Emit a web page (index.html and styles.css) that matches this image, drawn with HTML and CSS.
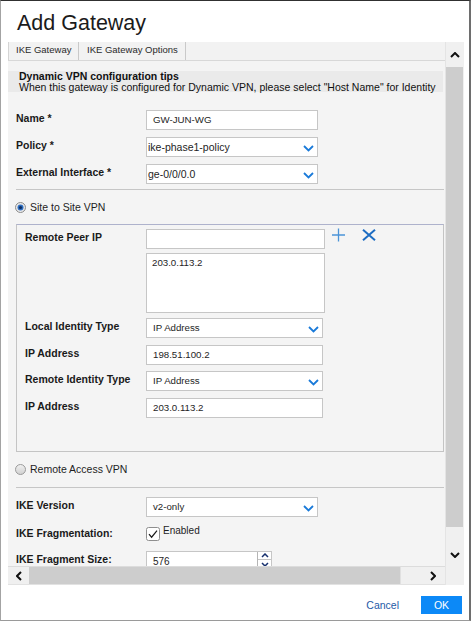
FILE: index.html
```html
<!DOCTYPE html>
<html>
<head>
<meta charset="utf-8">
<title>Add Gateway</title>
<link rel="stylesheet" href="styles.css">
</head>
<body>
<div class="dialog">
  <h1 class="title">Add Gateway</h1>
  <div class="scroller">
    <div class="viewport">
      <div class="tabs">
        <div class="tab tab1">IKE Gateway</div>
        <div class="tab tab2">IKE Gateway Options</div>
      </div>
      <div class="tips">
        <div class="tips-title">Dynamic VPN configuration tips</div>
        <div>When this gateway is configured for Dynamic VPN, please select "Host Name" for Identity</div>
      </div>
      <div class="form">
        <div class="row first">
          <div class="lbl">Name *</div>
          <div class="input w172">GW-JUN-WG</div>
        </div>
        <div class="row">
          <div class="lbl">Policy *</div>
          <div class="input select tight w172"><span>ike-phase1-policy</span><svg width="11" height="7" viewBox="0 0 11 7"><path d="M1 1l4.5 4.5L10 1" stroke="#1a7ad9" stroke-width="1.8" fill="none"/></svg></div>
        </div>
        <div class="row">
          <div class="lbl">External Interface *</div>
          <div class="input select tight w172"><span>ge-0/0/0.0</span><svg width="11" height="7" viewBox="0 0 11 7"><path d="M1 1l4.5 4.5L10 1" stroke="#1a7ad9" stroke-width="1.8" fill="none"/></svg></div>
        </div>
        <div class="sep"></div>
        <div class="radio-row">
          <svg class="radio" width="11" height="11" viewBox="0 0 11 11"><circle cx="5.5" cy="5.5" r="5" fill="#e9e9e9" stroke="#8c8c8c"/><circle cx="5.5" cy="5.5" r="3" fill="#2f6fc2"/><circle cx="5.5" cy="5.5" r="1.6" fill="#0f2f62"/></svg>
          <span>Site to Site VPN</span>
        </div>
        <div class="box">
          <div class="row boxrow firstbox">
            <div class="lbl blbl">Remote Peer IP</div>
            <div class="input w179"></div>
            <svg class="plus" width="15" height="14" viewBox="0 0 15 14"><path d="M7.5 0.5v13M1 7h13" stroke="#4b94d8" stroke-width="1.3" fill="none"/></svg>
            <svg class="xicon" width="14" height="12" viewBox="0 0 14 12"><path d="M1 0.8l12 10.4M13 0.8L1 11.2" stroke="#1c6cc2" stroke-width="2" fill="none"/></svg>
          </div>
          <div class="textarea">203.0.113.2</div>
          <div class="row boxrow afterarea">
            <div class="lbl blbl">Local Identity Type</div>
            <div class="input select w177"><span>IP Address</span><svg width="11" height="7" viewBox="0 0 11 7"><path d="M1 1l4.5 4.5L10 1" stroke="#1a7ad9" stroke-width="1.8" fill="none"/></svg></div>
          </div>
          <div class="row boxrow">
            <div class="lbl blbl">IP Address</div>
            <div class="input w177">198.51.100.2</div>
          </div>
          <div class="row boxrow">
            <div class="lbl blbl">Remote Identity Type</div>
            <div class="input select w177"><span>IP Address</span><svg width="11" height="7" viewBox="0 0 11 7"><path d="M1 1l4.5 4.5L10 1" stroke="#1a7ad9" stroke-width="1.8" fill="none"/></svg></div>
          </div>
          <div class="row boxrow">
            <div class="lbl blbl">IP Address</div>
            <div class="input w177">203.0.113.2</div>
          </div>
        </div>
        <div class="radio-row">
          <svg class="radio" width="11" height="11" viewBox="0 0 11 11"><defs><linearGradient id="rg" x1="0" y1="0" x2="0" y2="1"><stop offset="0" stop-color="#f2f2f2"/><stop offset="1" stop-color="#cfcfcf"/></linearGradient></defs><circle cx="5.5" cy="5.5" r="5" fill="url(#rg)" stroke="#9a9a9a"/></svg>
          <span>Remote Access VPN</span>
        </div>
        <div class="sep sep2"></div>
        <div class="row ver">
          <div class="lbl">IKE Version</div>
          <div class="input select w172"><span>v2-only</span><svg width="11" height="7" viewBox="0 0 11 7"><path d="M1 1l4.5 4.5L10 1" stroke="#1a7ad9" stroke-width="1.8" fill="none"/></svg></div>
        </div>
        <div class="row frag">
          <div class="lbl fraglbl">IKE Fragmentation:</div>
          <svg class="check" width="14" height="14" viewBox="0 0 14 14"><rect x="0.5" y="0.5" width="13" height="13" rx="2" fill="#fff" stroke="#8e8e8e"/><path d="M3 7.2l2.6 3L11 3.6" stroke="#1a1a1a" stroke-width="1.2" fill="none"/></svg>
          <span class="enabled">Enabled</span>
        </div>
        <div class="row size">
          <div class="lbl">IKE Fragment Size:</div>
          <div class="input w126 spin-input"><span>576</span>
            <div class="spinner">
              <div class="sp-up"><svg width="8" height="5" viewBox="0 0 8 5"><path d="M1 4l3-3 3 3" stroke="#17306e" stroke-width="1.5" fill="none"/></svg></div>
              <div class="sp-down"><svg width="8" height="5" viewBox="0 0 8 5"><path d="M1 1l3 3 3-3" stroke="#17306e" stroke-width="1.5" fill="none"/></svg></div>
            </div>
          </div>
        </div>
      </div>
    </div>
    <div class="vscroll">
      <div class="vbtn up"><svg width="10" height="6" viewBox="0 0 10 6"><path d="M1 5l4-4 4 4" stroke="#111" stroke-width="2" fill="none"/></svg></div>
      <div class="vthumb"></div>
      <div class="vbtn down"><svg width="10" height="6" viewBox="0 0 10 6"><path d="M1 1l4 4 4-4" stroke="#111" stroke-width="2" fill="none"/></svg></div>
    </div>
    <div class="hscroll">
      <div class="hbtn left"><svg width="6" height="10" viewBox="0 0 6 10"><path d="M5 1L1 5l4 4" stroke="#111" stroke-width="2" fill="none"/></svg></div>
      <div class="hthumb"></div>
      <div class="htrack"></div>
      <div class="hbtn right"><svg width="6" height="10" viewBox="0 0 6 10"><path d="M1 1l4 4-4 4" stroke="#111" stroke-width="2" fill="none"/></svg></div>
    </div>
  </div>
  <div class="footer">
    <span class="cancel">Cancel</span>
    <span class="ok">OK</span>
  </div>
</div>
</body>
</html>
```

FILE: styles.css
```css
* { box-sizing: border-box; margin: 0; padding: 0; }
html, body { background: #fff; }
body {
  font-family: "Liberation Sans", Arial, sans-serif;
  color: #1e1e1e;
}
.dialog {
  width: 471px;
  height: 621px;
  border-left: 1px solid #a3a3a3;
  border-right: 2px solid #6e6e6e;
  border-top: 1px solid #303030;
  border-bottom: 1px solid #9a9a9a;
  background: #fff;
  display: flex;
  flex-direction: column;
}
.title {
  height: 41px;
  flex: none;
  font-size: 21.5px;
  font-weight: normal;
  line-height: 25px;
  padding: 10px 0 0 16px;
  color: #1b1b1b;
}
.scroller {
  flex: none;
  margin-left: 7px;
  width: 456px;
  height: 543px;
  display: grid;
  grid-template-columns: 437px 19px;
  grid-template-rows: 524px 19px;
}
.viewport {
  grid-column: 1;
  grid-row: 1;
  background: #f4f4f4;
  overflow: hidden;
}
.tabs {
  display: flex;
  height: 19px;
  border-bottom: 1px solid #d8d8d8;
  background: #f2f2f2;
}
.tab {
  font-size: 9.5px;
  line-height: 16px;
  padding-left: 8px;
  color: #2a2a2a;
  border-right: 1px solid #c9c9c9;
  white-space: nowrap;
}
.tab1 { width: 71px; border-left: 1px solid #d4d4d4; padding-left: 7px; }
.tab2 { width: 107px; }
.tips {
  margin: 10px 2px 0 0;
  height: 21px;
  background: #eaeaea;
  padding-left: 11px;
  font-size: 10.5px;
  line-height: 10.5px;
  color: #111;
  white-space: nowrap;
}
.tips-title { font-weight: bold; }
.form { padding: 0 1px 0 8px; }
.row {
  display: flex;
  align-items: flex-start;
  height: 20px;
  margin-top: 7px;
}
.row.first { margin-top: 18px; }
.lbl {
  width: 130px;
  flex: none;
  font-size: 10.5px;
  font-weight: bold;
  line-height: 14px;
  padding-top: 1px;
  color: #1a1a1a;
  white-space: nowrap;
}
.blbl { width: 121px; }
.input {
  flex: none;
  height: 20px;
  background: #fff;
  border: 1px solid #c6c6c6;
  font-size: 9.7px;
  line-height: 18px;
  padding-left: 6px;
  color: #1e1e1e;
  white-space: nowrap;
}
.select {
  display: flex;
  justify-content: space-between;
  align-items: center;
  padding-right: 3px;
}
.select svg { margin-top: 2px; }
.tight { padding-left: 1px; font-size: 10.5px; }
.w172 { width: 172px; }
.w177 { width: 177px; }
.w179 { width: 179px; }
.w126 { width: 126px; }
.sep {
  height: 1px;
  background: #c6c6c6;
  margin-top: 5px;
}
.sep2 { margin-top: 11px; }
.radio-row {
  display: flex;
  align-items: center;
  height: 14px;
  margin-top: 10px;
  font-size: 10.5px;
  line-height: 14px;
  color: #1e1e1e;
}
.radio { margin-left: -1px; margin-right: 4px; flex: none; }
.box {
  margin-top: 10px;
  border: 1px solid #c4c4c4;
  border-top-color: #aeb2cc;
  padding: 4px 0 33px 8px;
}
.boxrow { margin-top: 6.7px; }
.firstbox { margin-top: 0; }
.afterarea { margin-top: 5px; }
.plus { margin-left: 6px; margin-top: -1px; flex: none; }
.xicon { margin-left: 16px; margin-top: 0; flex: none; }
.textarea {
  margin: 4px 0 0 121px;
  width: 179px;
  height: 60px;
  background: #fff;
  border: 1px solid #c6c6c6;
  font-size: 9.7px;
  line-height: 12px;
  padding: 3px 0 0 5px;
}
.ver { margin-top: 9px; }
.frag { height: 14px; margin-top: 10px; }
.fraglbl { padding-top: 0; margin-top: -1px; }
.check { flex: none; }
.enabled {
  margin-left: 3px;
  font-size: 10px;
  line-height: 12px;
  margin-top: -2px;
}
.size { margin-top: 10px; }
.spin-input {
  display: flex;
  justify-content: space-between;
  padding-right: 0;
  line-height: 19px;
  font-size: 10px;
}
.spinner {
  width: 14px;
  height: 18px;
  border-left: 1px solid #b5b5b5;
  display: flex;
  flex-direction: column;
}
.sp-up, .sp-down {
  height: 8px;
  display: flex;
  align-items: center;
  justify-content: center;
}
.sp-up { border-bottom: 1px solid #c4c4c4; height: 8px; }
.vscroll {
  grid-column: 2;
  grid-row: 1 / span 2;
  background: #f0f0f0;
  border-left: 1px solid #e4e4e4;
  display: flex;
  flex-direction: column;
}
.vbtn {
  display: flex;
  align-items: center;
  justify-content: center;
}
.vbtn.up { height: 25px; }
.vthumb { height: 460px; background: #cdcdcd; margin-right: 1px; }
.vbtn.down { flex: 1; padding-bottom: 2px; }
.hscroll {
  grid-column: 1;
  grid-row: 2;
  background: #f0f0f0;
  display: flex;
  border-top: 1px solid #dcdcdc;
  border-bottom: 1px solid #e2e2e2;
}
.hbtn {
  display: flex;
  align-items: center;
  justify-content: center;
}
.hbtn.left { width: 21px; }
.hbtn.right { width: 25px; }
.hthumb { width: 371px; background: #cdcdcd; }
.htrack { flex: 1; border-left: 1px solid #e0e0e0; }
.footer {
  flex: 1;
  display: flex;
  justify-content: flex-end;
  align-items: flex-start;
  padding: 11px 7px 0 0;
  gap: 22px;
}
.cancel {
  font-size: 10.5px;
  line-height: 18px;
  color: #1d5aa6;
}
.ok {
  width: 41px;
  height: 18px;
  background: #0c89f7;
  color: #fff;
  font-size: 10.5px;
  line-height: 18px;
  text-align: center;
}
```
